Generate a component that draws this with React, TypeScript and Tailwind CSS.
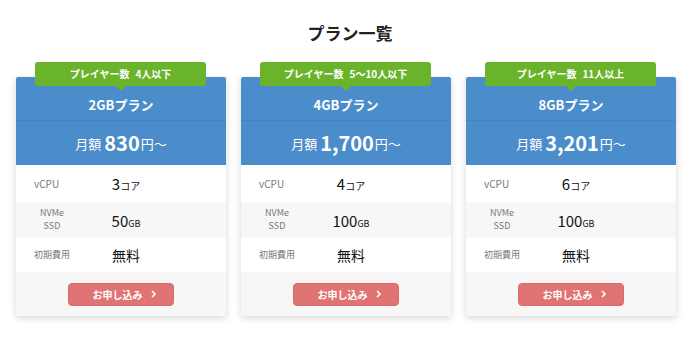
const plans = [
  { badge: '4人以下', name: '2GBプラン', price: '830', cpu: '3', ssd: '50' },
  { badge: '5〜10人以下', name: '4GBプラン', price: '1,700', cpu: '4', ssd: '100' },
  { badge: '11人以上', name: '8GBプラン', price: '3,201', cpu: '6', ssd: '100' },
];

type Plan = (typeof plans)[number];

function PlanCard({ plan }: { plan: Plan }) {
  return (
    <div className="relative w-[210px] bg-white shadow-[0_2px_7px_rgba(0,0,0,0.16)]">
      {/* バッジ */}
      <div className="absolute left-[19px] right-[20px] top-[-15px] h-[24px] rounded-[3px] bg-[#6ab42b] flex items-center justify-center text-white text-[10px] font-bold leading-none">
        <span>プレイヤー数</span>
        <span className="ml-[6px]">{plan.badge}</span>
        <div className="absolute left-1/2 -translate-x-1/2 bottom-[-5px] w-0 h-0 border-l-[5px] border-r-[5px] border-t-[5px] border-l-transparent border-r-transparent border-t-[#6ab42b]" />
      </div>

      {/* ヘッダー */}
      <div className="bg-[#4b8dcb] text-white rounded-t-[2px]">
        <div className="h-[44px] flex items-end justify-center pb-[6px] border-b border-[#4383c2] text-[13px] font-bold leading-[18px]">
          {plan.name}
        </div>
        <div className="h-[44px] flex items-center justify-center">
          <span className="text-[13px] leading-none">月額</span>
          <span className="text-[20px] font-bold leading-none ml-[3px] mr-[1px]">{plan.price}</span>
          <span className="text-[13px] leading-none">円〜</span>
        </div>
      </div>

      {/* スペック */}
      <div className="h-[37px] flex items-center">
        <div className="w-[70px] pl-[18px] text-[10px] text-[#777]">vCPU</div>
        <div className="w-[80px] text-center text-[#111]">
          <span className="text-[15px]">{plan.cpu}</span>
          <span className="text-[10px]">コア</span>
        </div>
      </div>
      <div className="h-[36px] flex items-center bg-[#f7f7f7]">
        <div className="w-[70px] pl-[24px]">
          <div className="inline-block text-center text-[9px] leading-[13px] text-[#777]">
            NVMe
            <br />
            SSD
          </div>
        </div>
        <div className="w-[80px] text-center text-[#111]">
          <span className="text-[15px]">{plan.ssd}</span>
          <span className="text-[9px]">GB</span>
        </div>
      </div>
      <div className="h-[34px] flex items-center">
        <div className="w-[70px] pl-[18px] text-[9px] text-[#777]">初期費用</div>
        <div className="w-[80px] text-center text-[14px] text-[#111]">無料</div>
      </div>

      {/* ボタン */}
      <div className="h-[44px] flex items-center justify-center bg-[#f7f7f7]">
        <button className="w-[106px] h-[23px] rounded-[4px] bg-[#e07373] border border-[#d96a6a] flex items-center justify-center gap-[8px] pl-[6px] text-white text-[10px] font-bold">
          <span>お申し込み</span>
          <svg width="5" height="8" viewBox="0 0 5 8" fill="none">
            <path d="M1 1l3 3-3 3" stroke="white" strokeWidth="1.6" />
          </svg>
        </button>
      </div>
    </div>
  );
}

export default function App() {
  return (
    <div className="w-[700px] h-[338px] bg-white font-['Noto_Sans_CJK_JP',sans-serif]">
      <h1 className="pt-[20px] text-center text-[17px] font-bold leading-[26px] text-[#222]">
        プラン一覧
      </h1>
      <div className="mt-[31px] pl-[16px] flex gap-[15px]">
        {plans.map((plan) => (
          <PlanCard key={plan.name} plan={plan} />
        ))}
      </div>
    </div>
  );
}
